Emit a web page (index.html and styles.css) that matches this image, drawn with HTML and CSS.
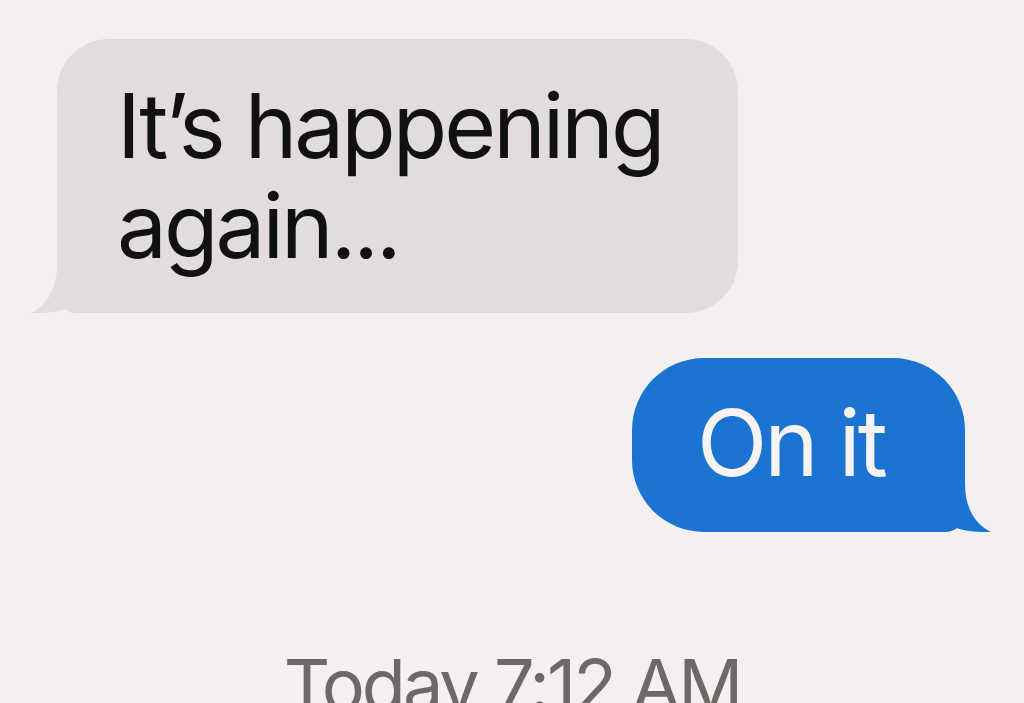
FILE: index.html
```html
<!DOCTYPE html>
<html lang="en">
<head>
    <meta charset="UTF-8">
    <meta name="viewport" content="width=device-width, initial-scale=1.0">
    <title>Messages</title>
    <link rel="stylesheet" href="styles.css">
</head>
<body>
    <main class="thread">
        <div class="bubble incoming">
            <p class="bubble-text">It’s happening again...</p>
            <svg class="tail tail-left" viewBox="0 0 90 70" aria-hidden="true">
                <path d="M26 0 L26 22 C26 46 16 62 0 70 C22 71 42 66 54 56 C64 65 76 70 90 70 L90 0 Z" />
            </svg>
        </div>

        <div class="bubble outgoing">
            <p class="bubble-text">On it</p>
            <svg class="tail tail-right" viewBox="0 0 90 70" aria-hidden="true">
                <path d="M64 0 L64 22 C64 46 74 62 90 70 C68 71 48 66 36 56 C26 65 14 70 0 70 L0 0 Z" />
            </svg>
        </div>

        <div class="timestamp">Today 7:12 AM</div>
    </main>
</body>
</html>
```

FILE: styles.css
```css
/* Base */
body {
    margin: 0;
    background: #f3f0ef;
    font-family: 'Inter', 'Noto Sans', sans-serif;
    overflow: hidden;
    height: 703px;
}

.thread {
    display: flex;
    flex-direction: column;
}

/* Bubbles */
.bubble {
    position: relative;
    box-sizing: border-box;
}

.bubble-text {
    margin: 0;
    line-height: 100px;
    letter-spacing: -3px;
}

.incoming {
    margin: 39px 0 0 57px;
    width: 681px;
    padding: 37px 20px 37px 60px;
    background: #e2dddc;
    color: #111;
    border-radius: 52px 52px 52px 20px;
    font-size: 89px;
}

.outgoing {
    align-self: flex-end;
    margin: 45px 59px 0 0;
    width: 333px;
    padding: 35px 10px 39px 65px;
    background: #1b74d2;
    color: #f6f3f2;
    border-radius: 72px 72px 20px 72px;
    font-size: 92px;
}

/* Tails */
.tail {
    position: absolute;
    bottom: 0;
    width: 90px;
    height: 70px;
}

.tail-left {
    left: -26px;
    fill: #e2dddc;
}

.tail-right {
    right: -26px;
    fill: #1b74d2;
}

/* Timestamp */
.timestamp {
    margin-top: 117px;
    text-align: center;
    font-size: 72px;
    line-height: 1;
    letter-spacing: -3px;
    color: #6e6968;
}
```
